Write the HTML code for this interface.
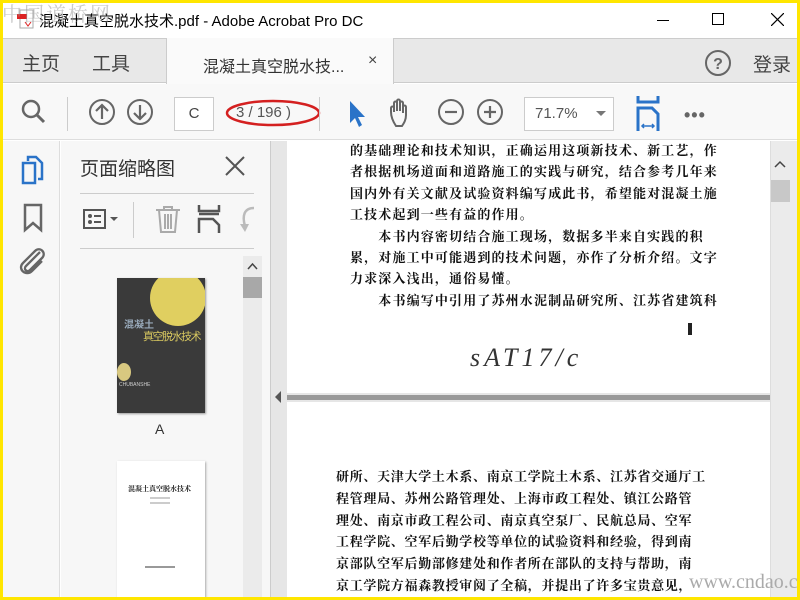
<!DOCTYPE html>
<html><head><meta charset="utf-8"><style>
*{margin:0;padding:0;box-sizing:border-box}
body{width:800px;height:600px;overflow:hidden;background:#ffe600;font-family:"Liberation Sans","Noto Sans CJK SC",sans-serif;position:relative}
.abs{position:absolute}
#win{position:absolute;left:3px;top:3px;width:794px;height:594px;background:#fff;overflow:hidden}
.t{font-family:"Liberation Serif","Noto Serif CJK SC",serif;font-weight:bold;font-size:13px;color:#111;white-space:nowrap;position:absolute}
</style></head><body>
<div id="win">
<div class="abs" style="left:0;top:0;width:794px;height:35px;background:#fff"></div>
<svg class="abs" style="left:14px;top:6px" width="20" height="22"><rect x="3" y="1" width="13" height="18" fill="#fff" stroke="#aaa"/><rect x="0" y="5" width="10" height="5" fill="#d22"/><path d="M8 13 l3 4 l3-4" stroke="#d22" fill="none"/></svg>
<div class="abs" style="left:36px;top:7px;font-size:15px;color:#000">混凝土真空脱水技术.pdf - Adobe Acrobat Pro DC</div>
<div class="abs" style="left:654px;top:17px;width:12px;height:1px;background:#000"></div>
<div class="abs" style="left:709px;top:10px;width:12px;height:12px;border:1px solid #000"></div>
<svg class="abs" style="left:768px;top:10px" width="13" height="13"><path d="M0 0L13 13M13 0L0 13" stroke="#000" stroke-width="1.2"/></svg>
<div class="abs" style="left:0;top:35px;width:794px;height:45px;background:#e8e8e8;border-top:1px solid #ccc;border-bottom:1px solid #ccc"></div>
<div class="abs" style="left:163px;top:35px;width:228px;height:46px;background:#fafafa;border-left:1px solid #ccc;border-right:1px solid #ccc"></div>
<div class="abs" style="left:19px;top:46px;font-size:19px;color:#444">主页</div>
<div class="abs" style="left:89px;top:46px;font-size:19px;color:#444">工具</div>
<div class="abs" style="left:200px;top:50px;font-size:16px;color:#333">混凝土真空脱水技...</div>
<div class="abs" style="left:365px;top:49px;font-size:16px;color:#444">×</div>
<svg class="abs" style="left:701px;top:46px" width="28" height="28"><circle cx="14" cy="14" r="12" fill="none" stroke="#666" stroke-width="2"/><text x="14" y="20" text-anchor="middle" font-size="16" font-weight="bold" fill="#666" font-family="Liberation Sans">?</text></svg>
<div class="abs" style="left:750px;top:47px;font-size:19px;color:#444">登录</div>
<div class="abs" style="left:0;top:81px;width:794px;height:56px;background:#f8f8f8;border-bottom:1px solid #ddd"></div>
<svg class="abs" style="left:17px;top:95px" width="28" height="28"><circle cx="11" cy="11" r="8" fill="none" stroke="#666" stroke-width="2.5"/><path d="M17 17l7 7" stroke="#666" stroke-width="3"/></svg>
<div class="abs" style="left:64px;top:94px;width:1px;height:34px;background:#ccc"></div>
<svg class="abs" style="left:86px;top:96px" width="70" height="28"><circle cx="13" cy="13" r="12" fill="none" stroke="#666" stroke-width="2"/><path d="M13 20V7M7 12l6-6 6 6" stroke="#666" stroke-width="2.2" fill="none"/><circle cx="51" cy="13" r="12" fill="none" stroke="#666" stroke-width="2"/><path d="M51 6v13M45 14l6 6 6-6" stroke="#666" stroke-width="2.2" fill="none"/></svg>
<div class="abs" style="left:171px;top:94px;width:40px;height:34px;background:#fff;border:1px solid #ccc;font-size:15px;color:#444;text-align:center;line-height:32px">C</div>
<div class="abs" style="left:233px;top:101px;font-size:15px;color:#555">3 / 196 )</div>
<svg class="abs" style="left:220px;top:94px" width="100" height="34"><ellipse cx="50" cy="16" rx="46" ry="12" fill="none" stroke="#d42020" stroke-width="2.5"/></svg>
<div class="abs" style="left:316px;top:94px;width:1px;height:34px;background:#ccc"></div>
<svg class="abs" style="left:344px;top:96px" width="20" height="30"><path d="M3 2 L3 24 L8 19 L12 28 L15 26 L11 18 L18 18 Z" fill="#2a73c8"/></svg>
<svg class="abs" style="left:385px;top:95px" width="30" height="32"><path d="M8 28 C4 22 3 18 3 14 V10 c0-2 3-2 3 0v4 V5c0-2 3-2 3 0v8V3c0-2 3-2 3 0v10V5c0-2 3-2 3 0v10V9c0-2 3-2 3 0v8c0 5-2 8-4 11z" fill="none" stroke="#666" stroke-width="2"/></svg>
<svg class="abs" style="left:435px;top:96px" width="70" height="28"><circle cx="13" cy="13" r="12" fill="none" stroke="#666" stroke-width="2"/><path d="M7 13h12" stroke="#666" stroke-width="2.2"/><circle cx="52" cy="13" r="12" fill="none" stroke="#666" stroke-width="2"/><path d="M46 13h12M52 7v12" stroke="#666" stroke-width="2.2"/></svg>
<div class="abs" style="left:521px;top:94px;width:90px;height:34px;background:#fff;border:1px solid #ccc"></div>
<div class="abs" style="left:532px;top:102px;font-size:15px;color:#555">71.7%</div>
<div class="abs" style="left:593px;top:108px;border-left:5px solid transparent;border-right:5px solid transparent;border-top:5px solid #777"></div>
<svg class="abs" style="left:633px;top:93px" width="26" height="36"><path d="M2 0v6h20V0" stroke="#2a73c8" stroke-width="3" fill="none"/><path d="M2 35V12h14l6 6v17" stroke="#2a73c8" stroke-width="3" fill="none"/><path d="M6 30h12M8 28l-2 2 2 2M16 28l2 2-2 2" stroke="#2a73c8" stroke-width="1.5" fill="none"/></svg>
<div class="abs" style="left:681px;top:102px;font-size:18px;color:#666;letter-spacing:1px;font-weight:bold">•••</div>
<div class="abs" style="left:0;top:138px;width:57px;height:456px;background:#f7f7f7;border-right:1px solid #ddd"></div>
<svg class="abs" style="left:17px;top:152px" width="28" height="32"><path d="M8 6 V2h8l6 6v16h-4" stroke="#2a73c8" stroke-width="2.5" fill="none"/><path d="M3 8h12v20H3z" stroke="#2a73c8" stroke-width="2.5" fill="none"/></svg>
<svg class="abs" style="left:19px;top:200px" width="24" height="30"><path d="M3 2h16v25l-8-7-8 7z" stroke="#666" stroke-width="2.5" fill="none"/></svg>
<svg class="abs" style="left:15px;top:243px" width="30" height="30"><path d="M22 6 L8 20 c-3 3 1 7 4 4 L24 12 c5-5-2-12-7-7 L5 17 c-6 6 3 14 9 8 L24 15" stroke="#666" stroke-width="2.3" fill="none"/></svg>
<div class="abs" style="left:58px;top:138px;width:209px;height:456px;background:#f7f7f7"></div>
<div class="abs" style="left:77px;top:151px;font-size:19px;color:#333">页面缩略图</div>
<svg class="abs" style="left:222px;top:153px" width="20" height="20"><path d="M1 1l18 18M19 1L1 19" stroke="#555" stroke-width="2"/></svg>
<div class="abs" style="left:77px;top:190px;width:174px;height:1px;background:#ccc"></div>
<div class="abs" style="left:77px;top:245px;width:174px;height:1px;background:#ccc"></div>
<svg class="abs" style="left:80px;top:203px" width="40" height="26"><rect x="1" y="4" width="21" height="18" fill="none" stroke="#555" stroke-width="2"/><circle cx="7" cy="10" r="2" fill="#555"/><circle cx="7" cy="16" r="2" fill="#555"/><path d="M11 10h7M11 16h7" stroke="#555" stroke-width="2"/><path d="M27 11h8l-4 4z" fill="#555"/></svg>
<div class="abs" style="left:130px;top:199px;width:1px;height:36px;background:#ccc"></div>
<svg class="abs" style="left:151px;top:202px" width="28" height="28"><path d="M2 5h24M10 5V2h8v3M5 5l2 22h14l2-22M11 9v15M14 9v15M17 9v15" stroke="#aaa" stroke-width="2" fill="none"/></svg>
<svg class="abs" style="left:194px;top:202px" width="24" height="28"><path d="M2 0v6h20V0M2 9h20M2 28V14h14l6 6v8" stroke="#555" stroke-width="2.5" fill="none"/></svg>
<svg class="abs" style="left:233px;top:203px" width="20" height="28"><path d="M18 2 C8 2 6 10 9 20" stroke="#bbb" stroke-width="2.5" fill="none"/><path d="M4 18l5 8 4-8z" fill="#bbb"/></svg>
<div class="abs" style="left:240px;top:253px;width:19px;height:341px;background:#ebebeb"></div>
<svg class="abs" style="left:244px;top:259px" width="11" height="8"><path d="M1 7l4.5-5 4.5 5" stroke="#444" stroke-width="1.5" fill="none"/></svg>
<div class="abs" style="left:240px;top:274px;width:19px;height:21px;background:#a8a8a8"></div>
<div class="abs" style="left:114px;top:275px;width:88px;height:135px;background:#3a3a3a;box-shadow:1px 1px 2px #999;overflow:hidden">
<div class="abs" style="left:33px;top:-8px;width:56px;height:56px;border-radius:50%;background:#e0cf60"></div>
<div class="abs" style="left:7px;top:38px;font-size:10px;color:#9ab;font-weight:bold">混凝土</div>
<div class="abs" style="left:26px;top:50px;font-size:11px;color:#d8c860;letter-spacing:-1.5px;white-space:nowrap">真空脱水技术</div>
<div class="abs" style="left:0;top:85px;width:14px;height:18px;border-radius:50%;background:#d8c880"></div>
<div class="abs" style="left:2px;top:104px;font-size:5px;color:#ccc">CHUBANSHE</div>
</div>
<div class="abs" style="left:152px;top:418px;font-size:14px;color:#333">A</div>
<div class="abs" style="left:114px;top:458px;width:88px;height:140px;background:#fff;box-shadow:1px 1px 2px #aaa">
<div class="abs" style="left:11px;top:23px;font-size:7px;font-weight:bold;color:#222;font-family:'Noto Serif CJK SC',serif">混凝土真空脱水技术</div>
<div class="abs" style="left:33px;top:36px;width:20px;height:2px;background:#ccc"></div>
<div class="abs" style="left:33px;top:41px;width:20px;height:2px;background:#ccc"></div>
<div class="abs" style="left:28px;top:105px;width:30px;height:2px;background:#999"></div>
</div>
<div class="abs" style="left:267px;top:138px;width:17px;height:456px;background:#e6e6e6;border-left:1px solid #ccc"></div>
<div class="abs" style="left:272px;top:388px;border-top:6px solid transparent;border-bottom:6px solid transparent;border-right:6px solid #555"></div>
<div class="abs" style="left:284px;top:138px;width:483px;height:456px;background:#fff"></div>
<div class="abs" style="left:284px;top:390px;width:483px;height:9px;background:#e6e6e6"></div>
<div class="abs" style="left:284px;top:392px;width:483px;height:5px;background:#999"></div>
<div class="t" style="left:347px;top:137px;line-height:21.4px;letter-spacing:1.15px">的基础理论和技术知识，正确运用这项新技术、新工艺，作<br>者根据机场道面和道路施工的实践与研究，结合参考几年来<br>国内外有关文献及试验资料编写成此书，希望能对混凝土施<br>工技术起到一些有益的作用。<br>　　本书内容密切结合施工现场，数据多半来自实践的积<br>累，对施工中可能遇到的技术问题，亦作了分析介绍。文字<br>力求深入浅出，通俗易懂。<br>　　本书编写中引用了苏州水泥制品研究所、江苏省建筑科</div>
<div class="abs" style="left:467px;top:340px;font-size:26px;color:#333;font-style:italic;letter-spacing:4px;font-family:'Liberation Serif',serif">sAT17/c</div>
<div class="abs" style="left:685px;top:320px;width:4px;height:12px;background:#222"></div>
<div class="t" style="left:333px;top:463px;line-height:21.8px;letter-spacing:0.7px">研所、天津大学土木系、南京工学院土木系、江苏省交通厅工<br>程管理局、苏州公路管理处、上海市政工程处、镇江公路管<br>理处、南京市政工程公司、南京真空泵厂、民航总局、空军<br>工程学院、空军后勤学校等单位的试验资料和经验，得到南<br>京部队空军后勤部修建处和作者所在部队的支持与帮助，南<br>京工学院方福森教授审阅了全稿，并提出了许多宝贵意见，</div>
<div class="abs" style="left:767px;top:138px;width:27px;height:456px;background:#ebebeb;border-left:1px solid #ddd"></div>
<svg class="abs" style="left:770px;top:156px" width="14" height="10"><path d="M2 8l5-5 5 5" stroke="#444" stroke-width="1.5" fill="none"/></svg>
<div class="abs" style="left:768px;top:177px;width:19px;height:22px;background:#c8c8c8"></div>
<div class="abs" style="left:686px;top:568px;font-size:20px;color:#aaa;font-family:'Liberation Serif',serif">www.cndao.com</div>
</div>
<div class="abs" style="left:2px;top:-2px;font-size:20px;color:rgba(150,150,150,0.5);letter-spacing:2px;font-family:'Noto Serif CJK SC',serif">中国道桥网</div>
</body></html>
